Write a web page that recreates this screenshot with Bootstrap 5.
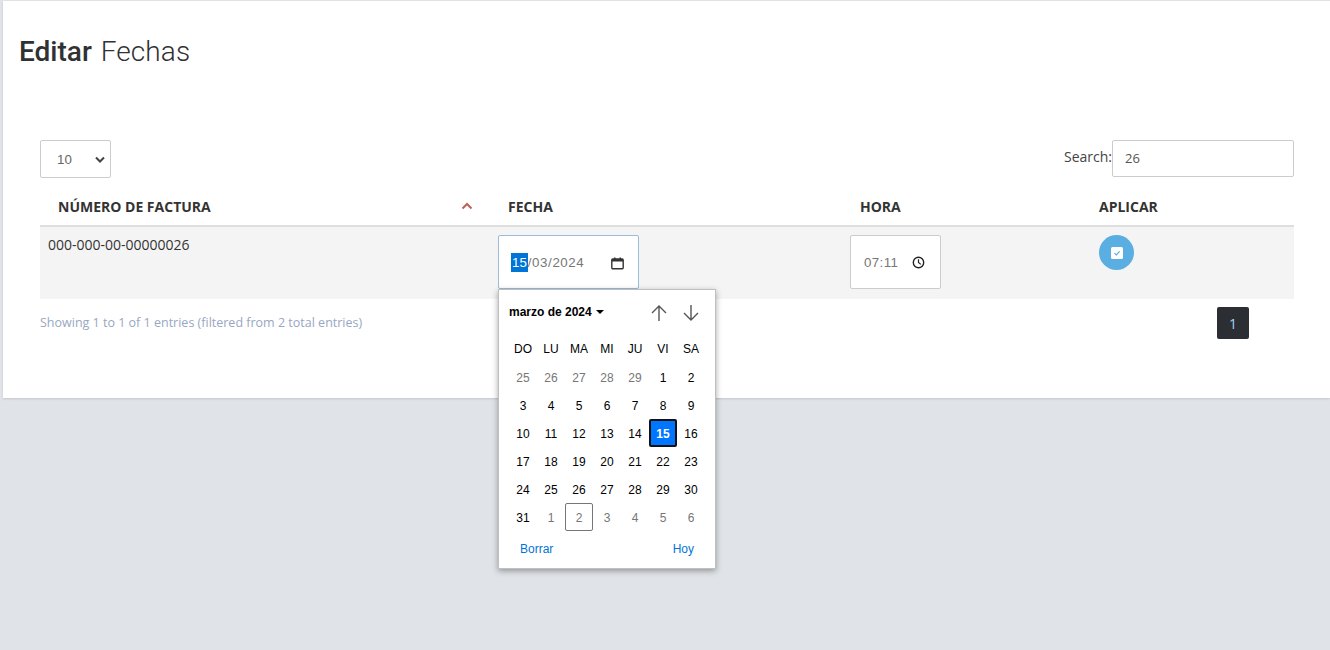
<!DOCTYPE html>
<html lang="es">
<head>
  <meta charset="UTF-8">
  <meta name="viewport" content="width=device-width, initial-scale=1.0">
  <title>Editar Fechas</title>
  <link href="https://cdn.jsdelivr.net/npm/bootstrap@5.3.3/dist/css/bootstrap.min.css" rel="stylesheet">
  <style>
    html, body { height: 650px; overflow: hidden; }
    body { background: #e0e4e8; font-family: "Open Sans", sans-serif; font-size: 13px; color: #333; }
    .sheet { margin: 1px 0 0 3px; height: 397px; background: #fff; box-shadow: 0 1px 2px rgba(0,0,0,.14); padding: 0 36px 0 37px; }
    .page-title { font-family: "Roboto", sans-serif; font-size: 28px; font-weight: 300; color: #2f3133; margin: 0 0 0 -21px; padding-top: 33px; height: 139px; line-height: 36px; word-spacing: 2px; }
    .page-title b { font-weight: 500; letter-spacing: 0; }
    .page-title span { letter-spacing: .1px; }
    .len-select { width: 71px; height: 38px; font-family: "Liberation Sans", sans-serif; font-size: 13.3px; color: #666; border-color: #ccc; border-radius: 2px; padding: 1px 0 0 16px; background-position: right 5px center; background-size: 10px 7px; background-image: url("data:image/svg+xml,%3csvg xmlns='http://www.w3.org/2000/svg' viewBox='0 0 10 7'%3e%3cpath fill='none' stroke='%23444' stroke-width='2' d='M1 1.500l4 4 4-4'/%3e%3c/svg%3e"); }
    .search-label { font-size: 14px; color: #444; margin-top: 6px; }
    .search-input { width: 182px; height: 37px; font-size: 13px; color: #555; border-color: #ccc; border-radius: 2px; padding: 0 12px 2px; }
    .facturas { table-layout: fixed; width: 1254px; margin: 12px 0 0; }
    .facturas th { font-size: 14px; font-weight: 700; color: #333; padding: 8px 18px 9px; height: 36px; border-bottom: 2px solid #dedede; line-height: 18px; }
    .facturas th:last-child { padding-left: 8px; }
    .facturas td { background: #f4f4f4; padding: 8px; height: 73px; vertical-align: top; border: 0; font-size: 14px; color: #333; box-shadow: none; line-height: 20px; }
    .sort-cell { position: relative; }
    .sort-up { position: absolute; right: 17px; top: 12px; }
    .field-box { height: 54px; background: #fff; border-radius: 2px; border: 1px solid #ccc; color: #777; font-family: "Liberation Sans", sans-serif; font-size: 13.3px; padding-top: 1px !important; }
    .date-box { width: 141px; border-color: #9cbcd8; padding: 0 14px 0 12px; letter-spacing: .6px; }
    .time-box { width: 91px; padding: 0 15px 0 13px; letter-spacing: .4px; }
    .sel-day { background: #0075d8; color: #fff; padding: 2px 1px; letter-spacing: 0; }
    .date-wrap { position: relative; width: 141px; }
    .apply-btn { width: 35px; height: 35px; border: 0; padding: 0; border-radius: 50%; background: #5baee2; }
    .cal-pop { position: absolute; left: 0; top: 54px; width: 218px; height: 280px; z-index: 5; background: #fff; border: 1px solid #bfbfbf; box-shadow: 0 2px 6px rgba(0,0,0,.35); font-family: "Liberation Sans", sans-serif; font-size: 12px; letter-spacing: 0; color: #000; padding: 0 10px; }
    .cal-head { height: 45px; font-weight: 700; }
    .cal-title { padding-bottom: 1px; }
    .cal-caret { width: 0; height: 0; border: 4px solid transparent; border-top-color: #000; border-bottom: 0; margin-left: 4px; }
    .cal-arrows { gap: 12px; margin-right: 4px; margin-top: 1px; }
    .cal-grid { display: grid; grid-template-columns: repeat(7, 28px); grid-auto-rows: 28px; }
    .cal-wd { display: flex; align-items: center; justify-content: center; }
    .cal-day { display: flex; align-items: center; justify-content: center; border-radius: 2px; padding-top: 1px; }
    .cal-other { color: #767676; }
    .cal-sel { background: #0075ff; color: #fff; font-weight: 700; border: 2px solid #111; }
    .cal-today { border: 1px solid #767676; }
    .cal-foot { color: #0075d8; padding: 0 11px 0 11px; height: 36px; }
    .info-text { font-size: 12.5px; color: #98a7c2; margin-top: 15px; }
    .page-one { width: 32px; height: 32px; background: #2b2e33; color: #a5d4f2; border-radius: 2px; margin: 8px 45px 0 0; font-size: 14px; }
  </style>
</head>
<body>
  <div class="sheet">
    <h1 class="page-title"><b>Editar</b> <span>Fechas</span></h1>

    <div class="d-flex justify-content-between align-items-start">
      <select class="form-select len-select">
        <option>10</option>
        <option>25</option>
        <option>50</option>
      </select>
      <div class="d-flex align-items-start">
        <label class="search-label">Search:</label>
        <input class="form-control search-input" type="text" value="26">
      </div>
    </div>

    <table class="table facturas mb-0">
      <colgroup>
        <col width="450">
        <col width="352">
        <col width="249">
        <col width="203">
      </colgroup>
      <thead>
        <tr>
          <th class="sort-cell">NÚMERO DE FACTURA
            <svg class="sort-up" width="12" height="8" viewBox="0 0 12 8"><path d="M1.500 6.500 6 2l4.500 4.500" fill="none" stroke="#c0605a" stroke-width="2"/></svg>
          </th>
          <th>FECHA</th>
          <th>HORA</th>
          <th>APLICAR</th>
        </tr>
      </thead>
      <tbody>
        <tr>
          <td>000-000-00-00000026</td>
          <td>
            <div class="date-wrap">
              <div class="field-box date-box d-flex align-items-center justify-content-between">
                <span><span class="sel-day">15</span>/03/2024</span>
                <svg width="13" height="14" viewBox="0 0 13 14"><path d="M1.800 3h9.400a1 1 0 0 1 1 1v7.700a1 1 0 0 1-1 1H1.800a1 1 0 0 1-1-1V4a1 1 0 0 1 1-1Z" fill="none" stroke="#333" stroke-width="1.400"/><path d="M1 3h11v2.500H1zM3 1.500h1.500V3H3zM8.500 1.500H10V3H8.500z" fill="#333"/></svg>
              </div>
              <div class="cal-pop">
                <div class="cal-head d-flex align-items-center justify-content-between">
                  <span class="cal-title d-flex align-items-center">marzo de 2024<span class="cal-caret"></span></span>
                  <span class="cal-arrows d-flex">
                    <svg width="20" height="20" viewBox="0 0 20 20"><path d="M10 18V3M3 10l7-7 7 7" fill="none" stroke="#555" stroke-width="1.400"/></svg>
                    <svg width="20" height="20" viewBox="0 0 20 20"><path d="M10 2v15M3 10l7 7 7-7" fill="none" stroke="#555" stroke-width="1.400"/></svg>
                  </span>
                </div>
                <div class="cal-grid" id="calGrid"></div>
                <div class="cal-foot d-flex align-items-center justify-content-between">
                  <span>Borrar</span>
                  <span>Hoy</span>
                </div>
              </div>
            </div>
          </td>
          <td>
            <div class="field-box time-box d-flex align-items-center justify-content-between">
              <span>07:11</span>
              <svg width="13" height="13" viewBox="0 0 14 14"><circle cx="7" cy="7" r="5.600" fill="none" stroke="#222" stroke-width="1.500"/><path d="M7 3.500V7l2.500 2" fill="none" stroke="#222" stroke-width="1.300"/></svg>
            </div>
          </td>
          <td>
            <button class="apply-btn d-flex align-items-center justify-content-center" type="button" aria-label="Aplicar">
              <svg width="12" height="12" viewBox="0 0 12 12"><rect width="12" height="12" rx="1.500" fill="#fff"/><path d="M3.500 6.200 5.300 8l3.400-3.600" fill="none" stroke="#5baee2" stroke-width="1.200"/></svg>
            </button>
          </td>
        </tr>
      </tbody>
    </table>

    <div class="d-flex justify-content-between align-items-start">
      <div class="info-text">Showing 1 to 1 of 1 entries (filtered from 2 total entries)</div>
      <div class="page-one d-flex align-items-center justify-content-center">1</div>
    </div>
  </div>

  <script>
    const weekdays = ["DO", "LU", "MA", "MI", "JU", "VI", "SA"];
    const days = [25, 26, 27, 28, 29, 1, 2, 3, 4, 5, 6, 7, 8, 9, 10, 11, 12, 13, 14, 15, 16, 17, 18, 19, 20, 21, 22, 23, 24, 25, 26, 27, 28, 29, 30, 31, 1, 2, 3, 4, 5, 6];
    let html = "";
    weekdays.forEach((d) => { html += `<div class="cal-wd">${d}</div>`; });
    days.forEach((d, i) => {
      let cls = "cal-day";
      if (i < 5 || i > 35) cls += " cal-other";
      if (i === 19) cls += " cal-sel";
      if (i === 37) cls += " cal-today";
      html += `<div class="${cls}">${d}</div>`;
    });
    document.getElementById("calGrid").innerHTML = html;
  </script>
  <script src="https://cdn.jsdelivr.net/npm/bootstrap@5.3.3/dist/js/bootstrap.bundle.min.js"></script>
</body>
</html>
